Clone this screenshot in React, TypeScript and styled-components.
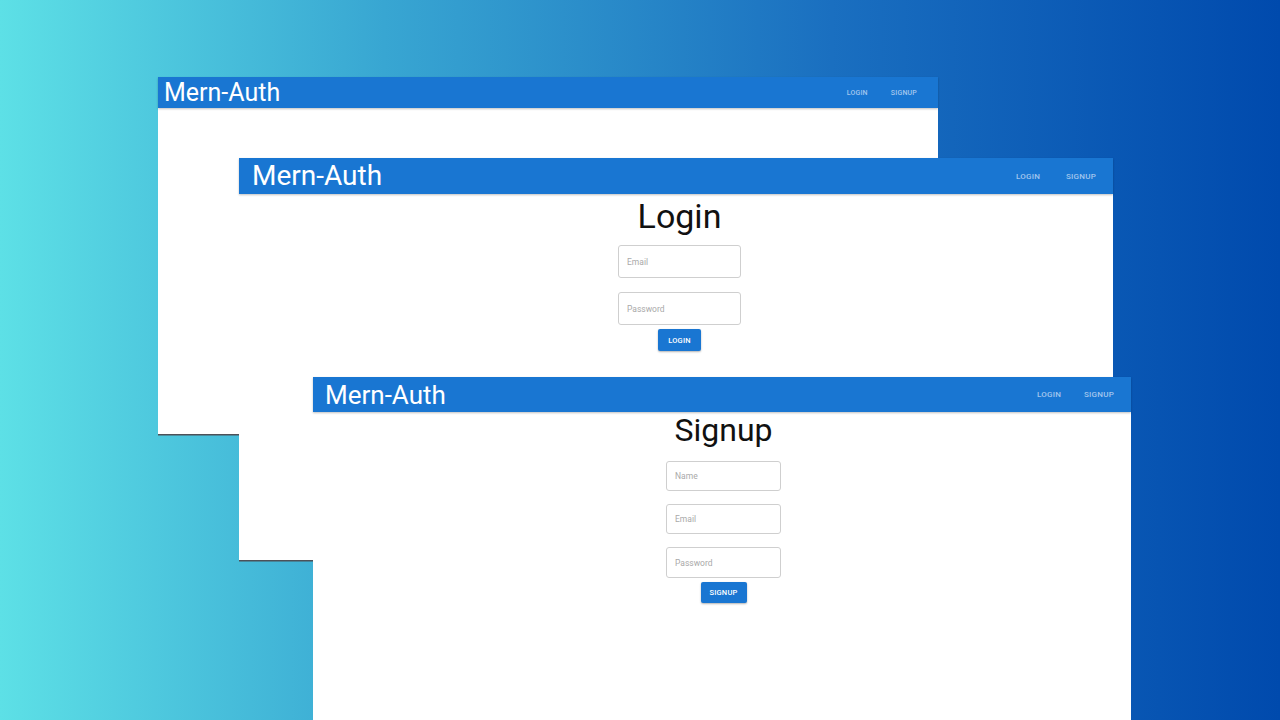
import React from "react";
import styled, { createGlobalStyle } from "styled-components";

const Global = createGlobalStyle`
  html, body { margin: 0; padding: 0; }
  body { font-family: Roboto, "Liberation Sans", sans-serif; }
`;

const Stage = styled.div`
  position: relative;
  width: 1280px;
  height: 720px;
  overflow: hidden;
  background: linear-gradient(90deg, #5de0e6 0%, #38a6d2 30%, #1a6fc0 65%, #004aad 100%);
`;

const Win = styled.div<{ $x: number; $y: number; $w: number; $h: number }>`
  position: absolute;
  left: ${(p) => p.$x}px;
  top: ${(p) => p.$y}px;
  width: ${(p) => p.$w}px;
  height: ${(p) => p.$h}px;
  background: #fff;
  box-shadow: 0 1.5px 0 #4d5158;
  display: flex;
  flex-direction: column;
`;

const Bar = styled.header<{ $h: number; $pl: number; $pr: number }>`
  height: ${(p) => p.$h}px;
  flex: none;
  background: #1976d2;
  display: flex;
  align-items: center;
  justify-content: space-between;
  padding: 0 ${(p) => p.$pr}px 0 ${(p) => p.$pl}px;
  box-shadow: 0 1px 2px rgba(0, 0, 0, 0.25);
  position: relative;
  z-index: 1;
`;

const Brand = styled.div<{ $fs: number }>`
  color: #fff;
  font-size: ${(p) => p.$fs}px;
  font-weight: 400;
  line-height: 1;
`;

const Nav = styled.nav<{ $gap: number }>`
  display: flex;
  gap: ${(p) => p.$gap}px;
`;

const NavItem = styled.span<{ $fs: number }>`
  color: #a4c6ee;
  font-size: ${(p) => p.$fs}px;
  font-weight: 500;
  letter-spacing: 0.02857em;
  text-transform: uppercase;
`;

const Form = styled.div<{ $gap: number; $shift: number }>`
  display: flex;
  flex-direction: column;
  align-items: center;
  gap: ${(p) => p.$gap}px;
  padding-left: ${(p) => p.$shift}px;
`;

const Heading = styled.h1<{ $fs: number; $mt: number; $mb: number }>`
  margin: ${(p) => p.$mt}px 0 ${(p) => p.$mb}px;
  font-size: ${(p) => p.$fs}px;
  font-weight: 400;
  line-height: 40px;
  color: #111;
`;

const Field = styled.div<{ $w: number; $h: number }>`
  width: ${(p) => p.$w}px;
  height: ${(p) => p.$h}px;
  box-sizing: border-box;
  border: 1px solid #cfcfcf;
  border-radius: 3px;
  display: flex;
  align-items: center;
  padding-left: 8px;
  color: #a9a9a9;
  font-size: 8.5px;
`;

const Btn = styled.div<{ $w: number; $h: number; $mt: number }>`
  width: ${(p) => p.$w}px;
  height: ${(p) => p.$h}px;
  margin-top: ${(p) => p.$mt}px;
  background: #1976d2;
  border-radius: 2px;
  box-shadow: 0 1px 2px rgba(0, 0, 0, 0.3);
  color: #fff;
  font-size: 7.5px;
  font-weight: 500;
  letter-spacing: 0.02857em;
  display: flex;
  align-items: center;
  justify-content: center;
`;

type BarProps = { h: number; fs: number; nfs: number; pl: number; pr: number; gap: number };

const AppBar = ({ h, fs, nfs, pl, pr, gap }: BarProps) => (
  <Bar $h={h} $pl={pl} $pr={pr}>
    <Brand $fs={fs}>Mern-Auth</Brand>
    <Nav $gap={gap}>
      <NavItem $fs={nfs}>Login</NavItem>
      <NavItem $fs={nfs}>Signup</NavItem>
    </Nav>
  </Bar>
);

export default function App() {
  return (
    <>
      <Global />
      <Stage>
        <Win $x={158} $y={77} $w={780} $h={357}>
          <AppBar h={31} fs={25} nfs={7} pl={6} pr={21} gap={23} />
        </Win>

        <Win $x={239} $y={158} $w={874} $h={402}>
          <AppBar h={36} fs={28} nfs={8} pl={13} pr={17} gap={26} />
          <Form $gap={14} $shift={7}>
            <Heading $fs={34} $mt={2} $mb={-5}>Login</Heading>
            <Field $w={123} $h={33}>Email</Field>
            <Field $w={123} $h={33}>Password</Field>
            <Btn $w={43} $h={22} $mt={-10}>LOGIN</Btn>
          </Form>
        </Win>

        <Win $x={313} $y={377} $w={818} $h={360}>
          <AppBar h={35} fs={26} nfs={8} pl={12} pr={17} gap={23} />
          <Form $gap={13} $shift={3}>
            <Heading $fs={32} $mt={-2} $mb={-2}>Signup</Heading>
            <Field $w={115} $h={30}>Name</Field>
            <Field $w={115} $h={30}>Email</Field>
            <Field $w={115} $h={31}>Password</Field>
            <Btn $w={46} $h={21} $mt={-9}>SIGNUP</Btn>
          </Form>
        </Win>
      </Stage>
    </>
  );
}
